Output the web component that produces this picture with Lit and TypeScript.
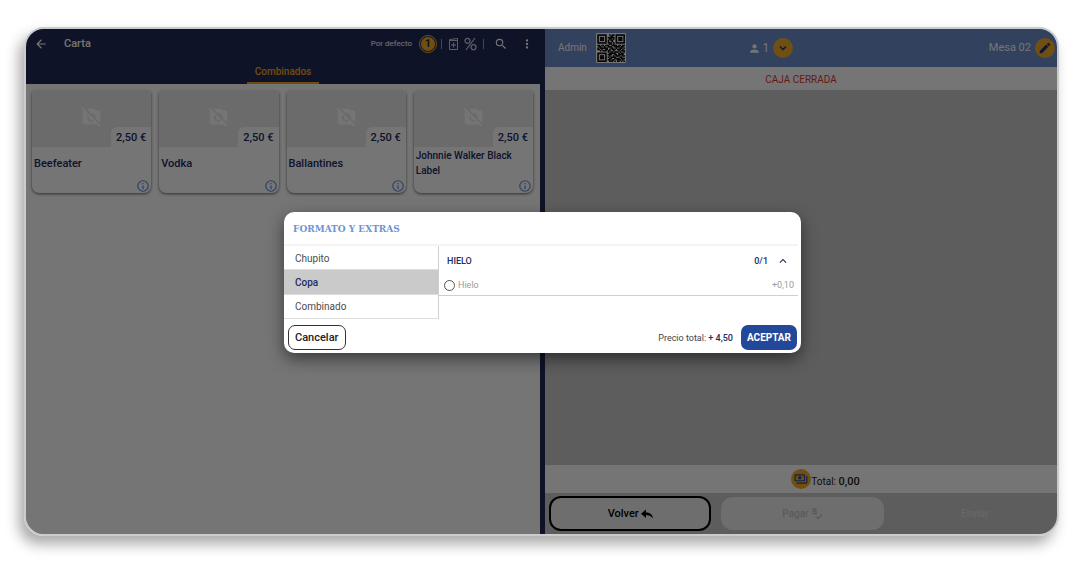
import { LitElement, html, css, svg } from "lit";
import { customElement, state } from "lit/decorators.js";

const QR_ROWS = [
  "111111100101101111111",
  "100000100011001000001",
  "101110101111101011101",
  "101110100110101011101",
  "101110101011001011101",
  "100000101001001000001",
  "111111101110101111111",
  "000000000110100000000",
  "110110111001111011011",
  "011001001110011110110",
  "101111110011001001101",
  "110100110101110111010",
  "001011101100100010111",
  "000000001011011101001",
  "111111100111110010110",
  "100000101110011011110",
  "101110100100101110011",
  "101110101011110001100",
  "101110100110011110111",
  "100000101101100111010",
  "111111100111010110101",
];

const PRODUCTS = [
  { name: "Beefeater", price: "2,50 €" },
  { name: "Vodka", price: "2,50 €" },
  { name: "Ballantines", price: "2,50 €" },
  { name: "Johnnie Walker Black Label", price: "2,50 €" },
];

const icon = (size: number, path: string) => html`<svg width=${size} height=${size} viewBox="0 0 24 24" fill="currentColor" aria-hidden="true"><path d=${path} /></svg>`;

const BACK = "M20 11H7.83l5.59-5.59L12 4l-8 8 8 8 1.41-1.41L7.83 13H20v-2z";
const SEARCH = "M15.5 14h-.79l-.28-.27A6.47 6.47 0 0 0 16 9.5 6.5 6.5 0 1 0 9.5 16c1.61 0 3.09-.59 4.23-1.57l.27.28v.79l5 4.99L20.49 19l-4.99-5zm-6 0A4.5 4.5 0 1 1 14 9.5 4.49 4.49 0 0 1 9.5 14z";
const MORE = "M12 8a2 2 0 1 0 0-4 2 2 0 0 0 0 4zm0 2a2 2 0 1 0 0 4 2 2 0 0 0 0-4zm0 6a2 2 0 1 0 0 4 2 2 0 0 0 0-4z";
const PERSON = "M12 12a4 4 0 1 0 0-8 4 4 0 0 0 0 8zm0 2c-2.67 0-8 1.34-8 4v2h16v-2c0-2.66-5.33-4-8-4z";
const DOWN = "M7 8 12 13l5-5 2 2-7 7-7-7z";
const UP = "M7.41 15.41 12 10.83l4.59 4.58L18 14l-6-6-6 6z";
const PENCIL = "M3 17.25V21h3.75L17.81 9.94l-3.75-3.75L3 17.25zM20.71 7.04a1 1 0 0 0 0-1.41l-2.34-2.34a1 1 0 0 0-1.41 0l-1.83 1.83 3.75 3.75 1.83-1.83z";
const INFO = "M11 7h2v2h-2zm0 4h2v6h-2zm1-9a10 10 0 1 0 0 20 10 10 0 0 0 0-20zm0 18a8 8 0 1 1 0-16 8 8 0 0 1 0 16z";
const REPLY = "M10 9V3L0 11.5 10 20v-6c5 0 10 1.5 14 7-.7-7-5-12-14-12z";
const PAYMENTS = "M19 14V6a2 2 0 0 0-2-2H3a2 2 0 0 0-2 2v8c0 1.1.9 2 2 2h14a2 2 0 0 0 2-2zm-2 0H3V6h14v8zm-7-7a3 3 0 1 0 0 6 3 3 0 0 0 0-6zm13 0v11a2 2 0 0 1-2 2H4v-2h17V7h2z";
const NO_PHOTO = "M10.94 8.12 7.48 4.66 9 3h6l1.83 2H20a2 2 0 0 1 2 2v12c0 .05-.01.1-.02.16l-5.07-5.07A5 5 0 0 0 10.94 8.12zM20.49 23.31 18.17 21H4a2 2 0 0 1-2-2V7c0-.59.27-1.12.68-1.49L.69 3.51 2.1 2.1l19.8 19.8-1.41 1.41zM14.49 17.32l-1.5-1.5A3 3 0 0 1 9.19 12.01l-1.5-1.5A5 5 0 0 0 14.49 17.32z";

@customElement("app-root")
export class AppRoot extends LitElement {
  @state() private format = "Copa";

  static styles = css`
    :host {
      display: flex;
      box-sizing: border-box;
      min-height: 100vh;
      padding: 27px 24px 28px;
      background: #fff;
      font: 10px/16px Roboto, sans-serif;
      color: #222;
    }
    * { box-sizing: border-box; }
    svg { display: block; flex: none; }
    button {
      font: inherit;
      color: inherit;
      background: none;
      border: 0;
      padding: 0;
      display: flex;
      align-items: center;
      justify-content: center;
      cursor: pointer;
    }
    .frame {
      position: relative;
      flex: 1;
      display: flex;
      border: 2px solid #cacbcb;
      border-radius: 20px;
      overflow: hidden;
      box-shadow: -5px 8px 14px rgba(0, 0, 0, 0.34);
    }
    .menu {
      flex: 514;
      min-width: 0;
      display: flex;
      flex-direction: column;
      background: #222a55;
      padding-right: 5px;
    }
    .bar { display: flex; align-items: center; height: 30px; padding: 0 6px 0 8px; color: #fff; }
    .bar h1 { margin: 0 auto 0 16px; font-size: 11px; line-height: 16px; font-weight: 500; }
    .mode { font-size: 8px; font-weight: 400; }
    .count {
      width: 16px;
      height: 16px;
      margin: 0 5px 0 8px;
      border-radius: 50%;
      background: #f5ac28;
      color: #222a55;
      border: 1px solid #222a55;
      outline: 1px solid #f5ac28;
      font-weight: 700;
      font-size: 11px;
    }
    .sep { width: 1px; height: 10px; background: #999cb4; }
    .tools { display: flex; gap: 4px; margin: 0 6px 0 5px; color: #ced0dd; }
    .search { margin-left: 10px; }
    .more { margin-left: 12px; }
    .tabs { display: flex; justify-content: center; height: 25px; }
    .tab { padding: 2px 8px 0; color: #f5a623; border-bottom: 2px solid #f5a623; font-weight: 500; }
    .products {
      flex: 1;
      display: grid;
      grid-template-columns: repeat(4, minmax(0, 1fr));
      align-content: start;
      gap: 8px;
      padding: 7px 7px 6px 6px;
      background: #fefefe;
    }
    .card {
      display: flex;
      flex-direction: column;
      height: 102px;
      border-radius: 3px 3px 7px 7px;
      background: #fff;
      box-shadow: 0 1px 3px rgba(0, 0, 0, 0.6);
      color: #222a62;
    }
    .photo {
      position: relative;
      display: flex;
      justify-content: center;
      height: 56px;
      padding-top: 15px;
      background: #e9eaea;
      border-radius: 3px 3px 0 0;
      color: #fff;
    }
    .price {
      position: absolute;
      right: 0;
      bottom: 0;
      padding: 3px 5px 1px 5px;
      border-radius: 6px 0 0 0;
      background: #fff;
      color: #222a62;
      font-size: 11px;
      font-weight: 500;
    }
    .name {
      flex: 1;
      display: flex;
      align-items: center;
      margin: 0;
      padding: 0 2px;
      font-size: 11px;
      line-height: 15px;
      font-weight: 500;
    }
    .name.long { font-size: 10px; }
    .info { align-self: flex-end; margin: 0 1px 0; color: #5f8ad8; }
    .order { flex: 512; min-width: 0; display: flex; flex-direction: column; background: #cbcbcb; }
    .head {
      display: grid;
      grid-template-columns: 8fr auto 11fr;
      align-items: center;
      height: 38px;
      padding: 0 2px 0 13px;
      background: #6b8ecc;
      color: #fff;
      font-size: 11px;
    }
    .user, .guests, .mesa { display: flex; align-items: center; }
    .user { gap: 9px; font-size: 10px; }
    .guests { gap: 1px; font-size: 12px; }
    .mesa { gap: 4px; justify-content: flex-end; }
    .round { width: 20px; height: 20px; border-radius: 50%; background: #f5ac28; color: #222a75; }
    .guests .round { margin-left: 3px; }
    .notice { margin: 0; height: 23px; line-height: 26px; text-align: center; background: #fff; color: #d63c2e; }
    .space { flex: 1; }
    .total { display: flex; justify-content: center; align-items: center; height: 28px; padding-left: 49px; background: #fff; }
    .total p { margin: 6px 0 0; }
    .total b { font-size: 11px; font-weight: 500; }
    .total .round { color: #2448a0; }
    .actions {
      display: grid;
      grid-template-columns: repeat(3, 1fr);
      align-items: center;
      gap: 10px;
      height: 41px;
      padding: 0 1px 0 4px;
      font-weight: 500;
    }
    .actions button { height: 33px; border-radius: 12px; gap: 2px; color: #e0e0e0; }
    .actions .back { height: 35px; border: 2px solid #000; color: #000; background: #f0f0f0; font-size: 11px; }
    .actions .pay { background: #f0f0f0; color: #c4c4c4; }
    .scrim {
      position: absolute;
      inset: 0;
      display: flex;
      align-items: center;
      justify-content: center;
      padding: 2px 0 0 2px;
      background: rgba(0, 0, 0, 0.54);
    }
    .dialog {
      width: 517px;
      max-width: 90%;
      border-radius: 10px;
      background: #fff;
      overflow: hidden;
      box-shadow: 0 6px 16px rgba(0, 0, 0, 0.5);
    }
    .dialog h2 {
      margin: 0 3px 0 0;
      padding: 0 9px;
      height: 34px;
      border-bottom: 2px solid #f4f4f4;
      font: 700 10px/34px "Roboto Slab", "DejaVu Serif Condensed", "DejaVu Serif", serif;
      color: #6d93d5;
    }
    .body { display: grid; grid-template-columns: 155px 1fr; height: 73px; padding-right: 3px; }
    .formats { display: flex; flex-direction: column; border-right: 1px solid #d0d0d0; }
    .formats button {
      flex: 1;
      padding: 2px 11px 0;
      justify-content: flex-start;
      border-bottom: 1px solid #dedede;
      color: #4c4c4c;
    }
    .formats .on { background: #cacaca; color: #222a62; font-weight: 500; }
    .group { display: flex; align-items: center; width: 100%; height: 29px; padding: 0 8px; color: #222a62; font-size: 9px; font-weight: 500; }
    .group span { margin-left: auto; }
    .group svg { margin-left: 8px; }
    .option {
      display: flex;
      align-items: center;
      height: 21px;
      padding: 0 4px 0 5px;
      border-bottom: 1px solid #cfcfcf;
      color: #9b9b9b;
      font-size: 9px;
    }
    .option label { flex: 1; display: flex; align-items: center; gap: 3px; }
    .option input {
      appearance: none;
      width: 11px;
      height: 11px;
      margin: 0;
      border: 1px solid #555;
      border-radius: 50%;
    }
    .option input:checked { background: #244a9a; }
    .foot { display: flex; align-items: center; height: 34px; padding: 3px 4px 0; }
    .foot button { height: 25px; padding: 0 6px; border-radius: 7px; }
    .foot .cancel { border: 1px solid #333; font-size: 11px; font-weight: 500; color: #222; }
    .foot .accept { background: #244899; color: #fff; font-weight: 700; }
    .foot p { margin: 0 8px 0 auto; font-size: 9px; color: #444; }
    .foot b { color: #222a62; font-weight: 500; }
  `;

  private renderQr() {
    return html`<svg width="30" height="30" viewBox="0 0 23 23" role="img" aria-label="QR">
      <rect width="23" height="23" rx="1" fill="#fff" />
      ${QR_ROWS.map((row, y) => [...row].map((bit, x) => (bit === "1" ? svg`<rect x=${x + 1} y=${y + 1} width="1.2" height="1.2" fill="#000" />` : null)))}
    </svg>`;
  }

  private renderMenu() {
    return html`<section class="menu">
      <header class="bar">
        <button aria-label="Atrás">${icon(14, BACK)}</button>
        <h1>Carta</h1>
        <span class="mode">Por defecto</span>
        <button class="count">1</button>
        <i class="sep"></i>
        <div class="tools">
          <button aria-label="Añadir">
            <svg width="13" height="14" viewBox="0 0 13 14" fill="none" stroke="currentColor" aria-hidden="true"><path d="M2.5 3.5h8v9h-8zM2.5 3.5v-1l8-1v2M6.5 5.5v5M4 8h5" /></svg>
          </button>
          <button aria-label="Descuento">
            <svg width="13" height="14" viewBox="0 0 13 14" fill="none" stroke="currentColor" stroke-width="1.2" aria-hidden="true"><circle cx="3.5" cy="3.8" r="2.5" /><circle cx="9.5" cy="10.2" r="2.5" /><path d="M11 1 2 13" /></svg>
          </button>
        </div>
        <i class="sep"></i>
        <button class="search" aria-label="Buscar">${icon(14, SEARCH)}</button>
        <button class="more" aria-label="Más">${icon(14, MORE)}</button>
      </header>
      <nav class="tabs"><button class="tab">Combinados</button></nav>
      <div class="products">
        ${PRODUCTS.map(
          (p) => html`<article class="card">
            <div class="photo">${icon(21, NO_PHOTO)}<span class="price">${p.price}</span></div>
            <h3 class="name ${p.name.length > 16 ? "long" : ""}">${p.name}</h3>
            <button class="info" aria-label="Información">${icon(14, INFO)}</button>
          </article>`
        )}
      </div>
    </section>`;
  }

  private renderOrder() {
    return html`<section class="order">
      <header class="head">
        <div class="user"><span>Admin</span>${this.renderQr()}</div>
        <div class="guests">${icon(13, PERSON)}<span>1</span><button class="round" aria-label="Comensales">${icon(12, DOWN)}</button></div>
        <div class="mesa"><span>Mesa 02</span><button class="round" aria-label="Editar">${icon(14, PENCIL)}</button></div>
      </header>
      <p class="notice">CAJA CERRADA</p>
      <div class="space"></div>
      <div class="total">
        <button class="round" aria-label="Cobros">${icon(14, PAYMENTS)}</button>
        <p>Total: <b>0,00</b></p>
      </div>
      <footer class="actions">
        <button class="back">Volver ${icon(12, REPLY)}</button>
        <button class="pay">Pagar
          <svg width="12" height="12" viewBox="0 0 12 12" fill="none" stroke="currentColor" stroke-width="1.5" aria-hidden="true"><path d="M5.5 1H2v2h3v2.500H1M5 8.500l2 2 4-4" /></svg>
        </button>
        <button>Enviar</button>
      </footer>
    </section>`;
  }

  private renderDialog() {
    return html`<div class="scrim">
      <div class="dialog" role="dialog" aria-labelledby="title">
        <h2 id="title">FORMATO Y EXTRAS</h2>
        <div class="body">
          <div class="formats">
            ${["Chupito", "Copa", "Combinado"].map(
              (f) => html`<button class=${f === this.format ? "on" : ""} @click=${() => (this.format = f)}>${f}</button>`
            )}
          </div>
          <div>
            <button class="group">HIELO<span>0/1</span>${icon(14, UP)}</button>
            <div class="option"><label><input type="radio" name="extra" />Hielo</label><span>+0,10</span></div>
          </div>
        </div>
        <div class="foot">
          <button class="cancel">Cancelar</button>
          <p>Precio total: <b>+ 4,50</b></p>
          <button class="accept">ACEPTAR</button>
        </div>
      </div>
    </div>`;
  }

  render() {
    return html`<main class="frame">${this.renderMenu()}${this.renderOrder()}${this.renderDialog()}</main>`;
  }
}
